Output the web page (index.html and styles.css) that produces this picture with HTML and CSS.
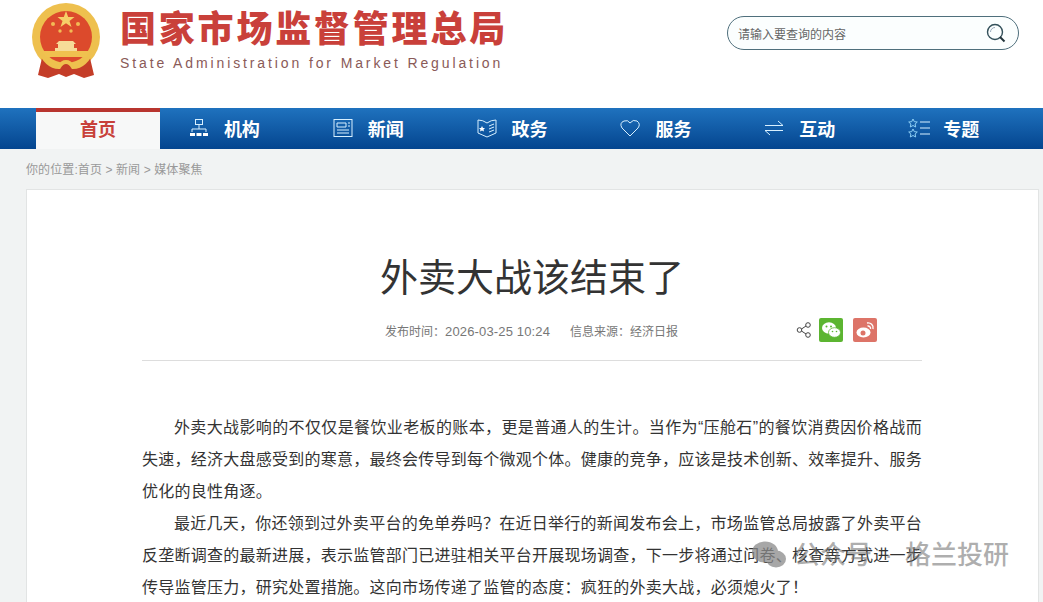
FILE: index.html
```html
<!DOCTYPE html>
<html lang="zh-CN">
<head>
    <meta charset="UTF-8">
    <title>外卖大战该结束了</title>
    <link rel="stylesheet" href="styles.css">
</head>
<body>
    <header class="top">
        <svg class="emblem" viewBox="0 0 68 76" width="68" height="76">
            <circle cx="34" cy="34" r="34" fill="#eec04e"/>
            <circle cx="34" cy="34" r="26" fill="#dc4a2c"/>
            <path d="M34 8 l2.200 6 h6.300 l-5 4 2 6 -5.500 -3.800 -5.500 3.800 2 -6 -5 -4 h6.300 Z" fill="#f6cf68"/>
            <circle cx="21" cy="21" r="2" fill="#f2bb55"/>
            <circle cx="46" cy="21" r="2" fill="#f2bb55"/>
            <circle cx="28" cy="28" r="1.700" fill="#f2bb55"/>
            <circle cx="39" cy="28" r="1.700" fill="#f2bb55"/>
            <path d="M27 38 h14 l3 3 h-2 v4 h3 v3 h-22 v-3 h3 v-4 h-2 Z" fill="#f6dc98"/>
            <path d="M8 48 h52 v6 h-52 Z" fill="#f0c14f"/>
            <path d="M10 55 L6 72 L16 75 L27 71 L34 74 L42 71 L52 75 L62 72 L58 55 L46 64 L34 60 L22 64 Z" fill="#c43d28"/>
            <path d="M6 44 Q14 64 27 64 Q30 59 34 59 Q38 59 41 64 Q54 64 62 44" fill="none" stroke="#eec04e" stroke-width="4"/>
        </svg>
        <div class="brand">
            <div class="brand-cn">国家市场监督管理总局</div>
            <div class="brand-en">State Administration for Market Regulation</div>
        </div>
        <div class="search">
            <span>请输入要查询的内容</span>
            <svg viewBox="0 0 20 20" width="20" height="20">
                <circle cx="9" cy="9" r="7.500" fill="none" stroke="#33505a" stroke-width="1.400"/>
                <path d="M4.500 9 A4.500 4.500 0 0 1 9 4.500" fill="none" stroke="#9ab" stroke-width="1"/>
                <path d="M14 14 L18.500 18.500" stroke="#22333a" stroke-width="2"/>
            </svg>
        </div>
    </header>

    <nav class="nav">
        <a class="nav-item active">首页</a>
        <a class="nav-item">
            <svg viewBox="0 0 20 20" width="20" height="20" fill="none" stroke="#d8f0ff" stroke-width="1">
                <rect x="6.500" y="1.500" width="7" height="5"/>
                <path d="M10 7 V11 M3 14 V11 H17 V14"/>
                <path d="M1 15 h5 v3 h-5 Z M7.500 15 h5 v3 h-5 Z M14 15 h5 v3 h-5 Z" fill="#fff" stroke="none"/>
            </svg>
            机构
        </a>
        <a class="nav-item">
            <svg viewBox="0 0 20 20" width="20" height="20" fill="none" stroke="#d8f0ff" stroke-width="1">
                <rect x="1" y="1.500" width="18" height="17"/>
                <path d="M4 5 h9 v4 h-9 Z M4 12 h12 M4 15 h12 M15 5 h2 M15 8 h2"/>
            </svg>
            新闻
        </a>
        <a class="nav-item">
            <svg viewBox="0 0 20 20" width="20" height="20" fill="none" stroke="#d8f0ff" stroke-width="1">
                <path d="M1 2 Q6 2 10 5 Q14 2 19 2 V15 L10 19 L1 15 Z"/>
                <path d="M5 8 l1 2 h2 l-1.500 1.500 0.500 2 -2 -1 -2 1 0.500 -2 -1.500 -1.500 h2 Z" fill="#fff" stroke="none"/>
                <path d="M12 8 l5 -2 M12 11 l5 -2 M12 14 l5 -2"/>
            </svg>
            政务
        </a>
        <a class="nav-item">
            <svg viewBox="0 0 20 20" width="20" height="20" fill="none" stroke="#d8f0ff" stroke-width="1">
                <path d="M10 18 L2 10 Q-1 5 4 3 Q8 1.500 10 5 Q13 1 17 3 Q21 6 18 10 Z"/>
            </svg>
            服务
        </a>
        <a class="nav-item">
            <svg viewBox="0 0 20 20" width="20" height="20" fill="none" stroke="#d8f0ff" stroke-width="1">
                <path d="M1 7.500 H19 L14 3 M19 12.500 H1 L6 17"/>
            </svg>
            互动
        </a>
        <a class="nav-item">
            <svg viewBox="0 0 22 20" width="22" height="20" fill="none" stroke="#8fd0f5" stroke-width="1">
                <path d="M5 1 l1.300 2.700 3 .3 -2.200 2 .6 3 -2.700 -1.500 -2.700 1.500 .6 -3 -2.200 -2 3 -.3 Z"/>
                <path d="M5 11 l1.300 2.700 3 .3 -2.200 2 .6 3 -2.700 -1.500 -2.700 1.500 .6 -3 -2.200 -2 3 -.3 Z"/>
                <path d="M12 4 H22 M12 10 H22 M12 16 H22" stroke="#d8f0ff"/>
            </svg>
            专题
        </a>
    </nav>

    <div class="crumb">你的位置:首页 &gt; 新闻 &gt; 媒体聚焦</div>

    <main class="card">
        <h1 class="title">外卖大战该结束了</h1>
        <div class="meta">
            <span>发布时间：<span class="meta-date">2026-03-25 10:24</span></span>
            <span class="meta-src">信息来源：经济日报</span>
            <div class="share">
                <svg viewBox="0 0 16 16" width="16" height="16" fill="none" stroke="#444" stroke-width="1">
                    <circle cx="3.500" cy="8" r="2.300"/>
                    <circle cx="12" cy="3" r="2.300"/>
                    <circle cx="12" cy="13" r="2.300"/>
                    <path d="M5.500 7 L10 4 M5.500 9 L10 12"/>
                </svg>
                <span class="btn-share wx">
                    <svg viewBox="0 0 20 20" width="20" height="20" fill="#fff">
                        <ellipse cx="8" cy="8" rx="7" ry="5.800"/>
                        <ellipse cx="13.500" cy="12.500" rx="6" ry="4.800" stroke="#5cb531" stroke-width=".8"/>
                        <circle cx="5.500" cy="6.500" r="1" fill="#5cb531"/>
                        <circle cx="10" cy="6.500" r="1" fill="#5cb531"/>
                        <circle cx="11.500" cy="11.500" r=".8" fill="#5cb531"/>
                        <circle cx="15.500" cy="11.500" r=".8" fill="#5cb531"/>
                    </svg>
                </span>
                <span class="btn-share wb">
                    <svg viewBox="0 0 20 20" width="20" height="20" fill="none">
                        <ellipse cx="8.500" cy="12.500" rx="7" ry="5" fill="#fff"/>
                        <circle cx="8" cy="13" r="2.500" fill="#dd7468"/>
                        <path d="M12 3 A5 5 0 0 1 18 9 M12.500 6 A2.500 2.500 0 0 1 15.500 9" stroke="#fff" stroke-width="1.400"/>
                    </svg>
                </span>
            </div>
        </div>
        <div class="text">
            <p>外卖大战影响的不仅仅是餐饮业老板的账本，更是普通人的生计。当作为“压舱石”的餐饮消费因价格战而失速，经济大盘感受到的寒意，最终会传导到每个微观个体。健康的竞争，应该是技术创新、效率提升、服务优化的良性角逐。</p>
            <p>最近几天，你还领到过外卖平台的免单券吗？在近日举行的新闻发布会上，市场监管总局披露了外卖平台反垄断调查的最新进展，表示监管部门已进驻相关平台开展现场调查，下一步将通过问卷、核查等方式进一步传导监管压力，研究处置措施。这向市场传递了监管的态度：疯狂的外卖大战，必须熄火了！</p>
        </div>
    </main>

    <div class="mark">
        <svg viewBox="0 0 34 28" width="34" height="28" fill="#8a8a8a">
            <ellipse cx="13" cy="11" rx="13" ry="10.500"/>
            <ellipse cx="24" cy="18" rx="10" ry="8.500"/>
        </svg>
        <span>公众号 · 格兰投研</span>
    </div>
</body>
</html>
```

FILE: styles.css
```css
* {
    margin: 0;
    padding: 0;
    box-sizing: border-box;
}

html, body {
    height: 602px;
    overflow: hidden;
}

body {
    font-family: "Liberation Sans", "Noto Sans CJK SC", sans-serif;
    background-color: #f1f3f3;
    color: #333;
    position: relative;
}

/* Header */
.top {
    height: 108px;
    background-color: #fff;
    display: flex;
    align-items: flex-start;
    padding-left: 32px;
}

.emblem {
    margin-top: 3px;
}

.brand {
    margin-left: 20px;
    margin-top: 9px;
    width: 384px;
}

.brand-cn {
    font-size: 36px;
    line-height: 42px;
    font-weight: 900;
    letter-spacing: 2.8px;
    color: #c9403a;
    white-space: nowrap;
}

.brand-en {
    font-size: 14px;
    line-height: 18px;
    margin-top: 3px;
    letter-spacing: 2.88px;
    color: #8a5a58;
    white-space: nowrap;
}

.search {
    margin-left: auto;
    margin-right: 24px;
    margin-top: 16px;
    width: 292px;
    height: 34px;
    border: 1px solid #4f6f7c;
    border-radius: 17px;
    display: flex;
    align-items: center;
    justify-content: space-between;
    padding: 0 12px 0 10px;
    font-size: 12px;
    color: #666;
    background-color: #fbfefe;
}

/* Nav */
.nav {
    height: 41px;
    padding-left: 36px;
    display: flex;
    background: linear-gradient(to bottom, #1f72be, #04458f);
}

.nav-item {
    width: 144px;
    padding: 0 0 2px 8px;
    display: flex;
    align-items: center;
    gap: 15px;
    font-size: 18px;
    font-weight: 700;
    color: #fff;
}

.nav-item:last-child {
    gap: 13px;
}

.nav-item svg {
    margin-left: 1px;
    flex-shrink: 0;
}

.nav-item.active {
    width: 124px;
    margin-right: 20px;
    padding: 0 0 5px;
    justify-content: center;
    color: #c8413a;
    background-color: #f7f8f8;
    border-top: 4px solid #b8352f;
}

.crumb {
    height: 40px;
    padding: 12px 0 0 26px;
    font-size: 12px;
    line-height: 18px;
    letter-spacing: .1px;
    color: #999;
}

/* Article card */
.card {
    margin-left: 26px;
    width: 1013px;
    height: 413px;
    overflow: hidden;
    background-color: #fff;
    border: 1px solid #e2e4e4;
    border-bottom: none;
    padding: 0 116px 0 115px;
}

.title {
    margin-top: 61px;
    text-align: center;
    font-size: 38px;
    line-height: 54px;
    font-weight: 400;
    color: #333;
}

.meta {
    margin-top: 15px;
    height: 41px;
    border-bottom: 1px solid #ddd;
    display: flex;
    align-items: flex-start;
    padding: 3px 0 0 243px;
    font-size: 12px;
    line-height: 18px;
    color: #777;
}

.meta-date {
    font-size: 13px;
    letter-spacing: .15px;
}

.meta-src {
    margin-left: 20px;
}

.share {
    margin-left: auto;
    margin-right: 45px;
    margin-top: -5px;
    display: flex;
    align-items: center;
    gap: 10px;
}

.btn-share {
    width: 24px;
    height: 24px;
    border-radius: 2px;
    display: flex;
    align-items: center;
    justify-content: center;
}

.btn-share.wx {
    background-color: #5cb531;
    margin-left: -3px;
}

.btn-share.wb {
    background-color: #dd7468;
}

.text {
    margin-top: 51px;
    font-size: 16px;
    line-height: 32px;
    letter-spacing: .25px;
    color: #333;
}

.text p {
    text-indent: 2em;
    text-align: justify;
}

/* Watermark over the text */
.mark {
    position: absolute;
    left: 752px;
    top: 540px;
    display: flex;
    align-items: center;
    gap: 8px;
    font-size: 26px;
    line-height: 30px;
    font-weight: 500;
    word-spacing: 5px;
    color: rgba(120, 120, 120, .6);
    white-space: nowrap;
}

.mark svg {
    opacity: .75;
}
```
